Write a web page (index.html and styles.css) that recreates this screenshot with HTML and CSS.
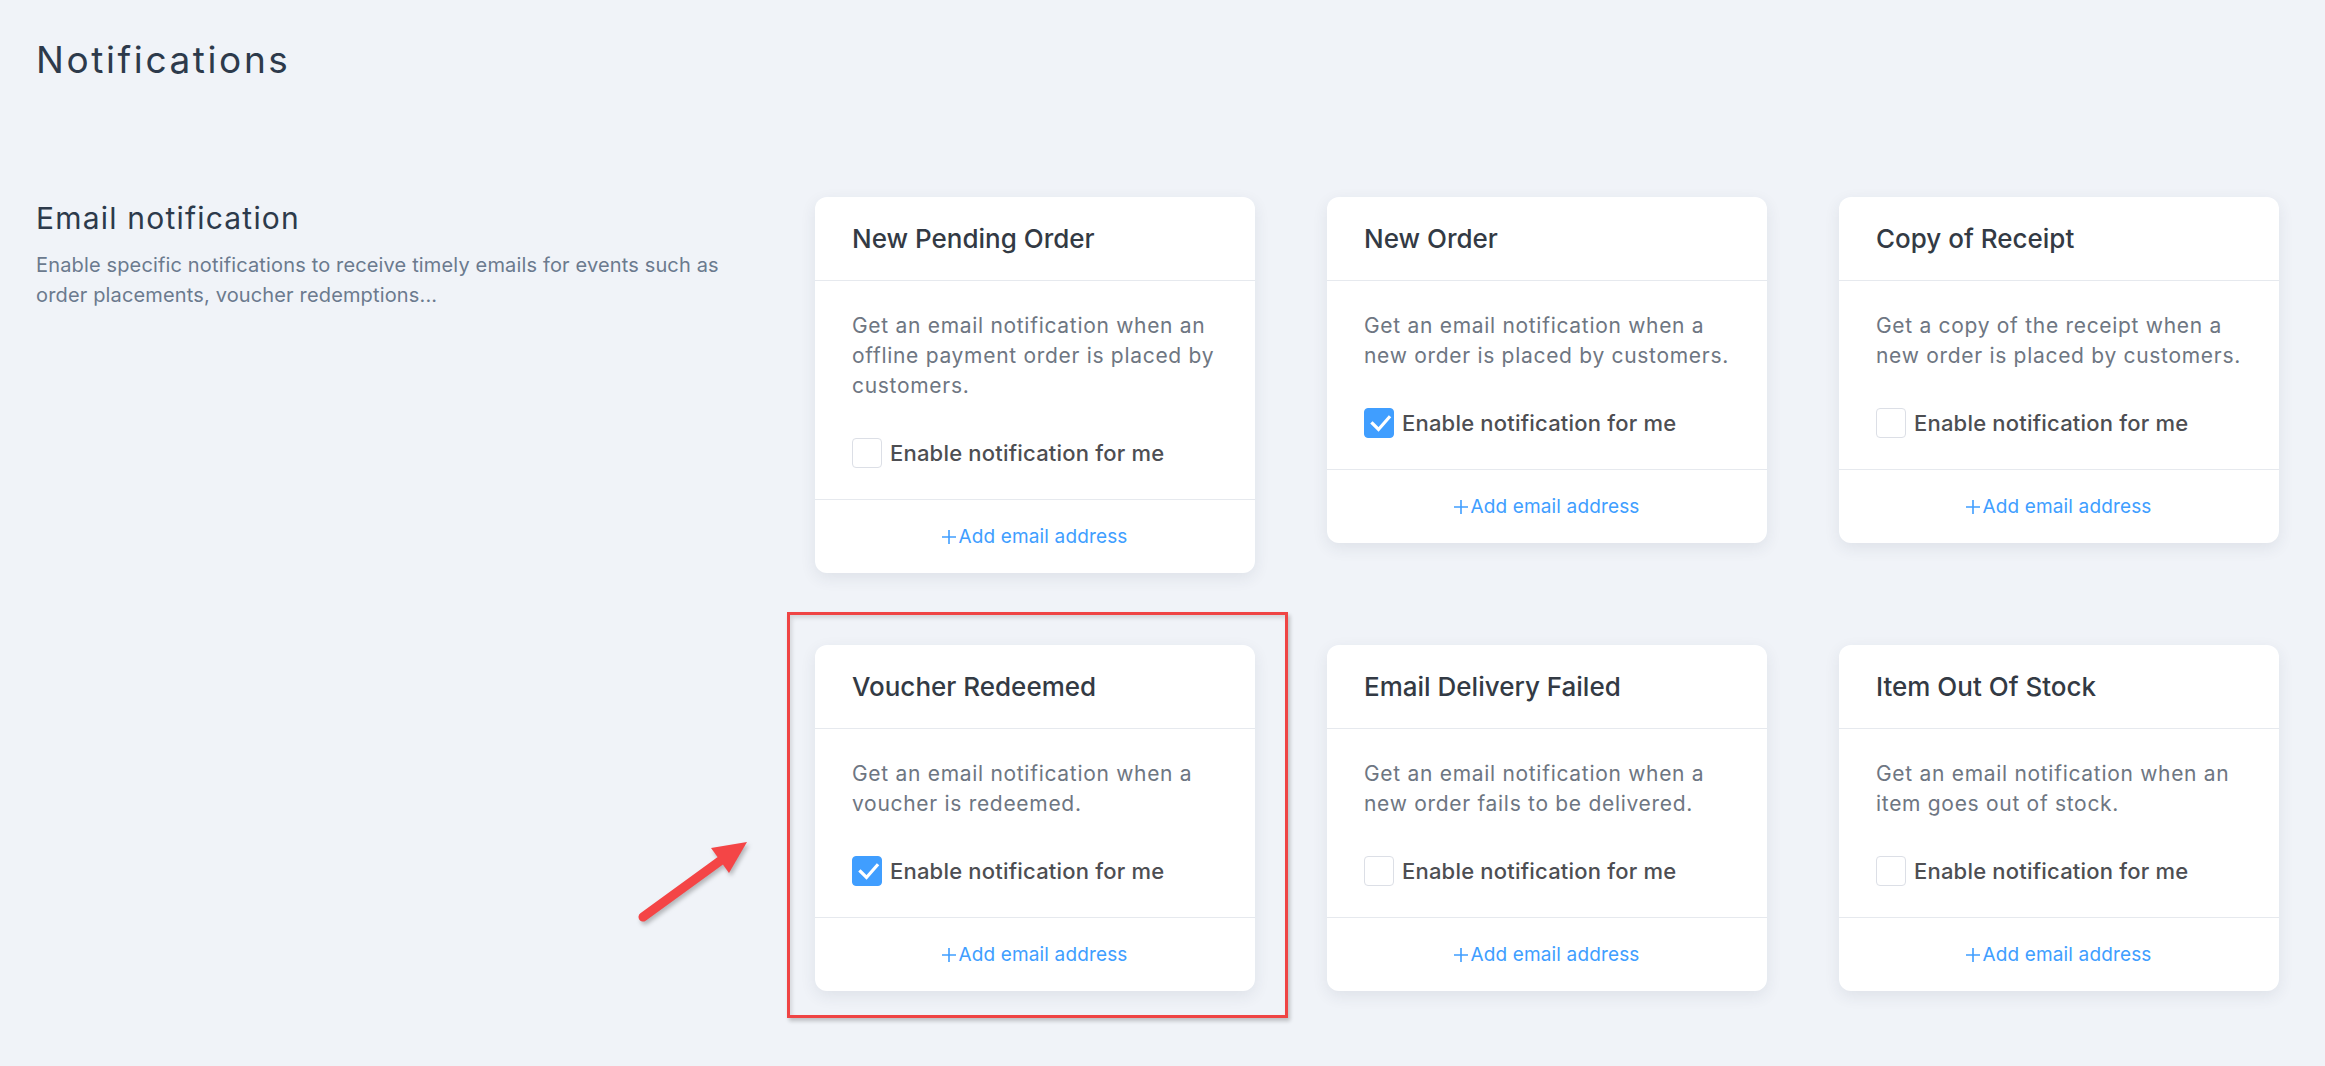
FILE: index.html
```html
<!DOCTYPE html>
<html lang="en">
<head>
<meta charset="utf-8">
<title>Notifications</title>
<link rel="stylesheet" href="styles.css">
</head>
<body>
<main class="page">
  <h1 class="page-title">Notifications</h1>
  <section class="section">
    <div class="section-intro">
      <h2 class="section-title">Email notification</h2>
      <p class="section-desc">Enable specific notifications to receive timely emails for events such as order placements, voucher redemptions...</p>
    </div>
    <div class="card-grid">
      <div class="card">
        <div class="card-head">New Pending Order</div>
        <div class="card-body">
          <p class="card-desc">Get an email notification when an offline payment order is placed by customers.</p>
          <label class="check"><span class="box"></span><span class="check-label">Enable notification for me</span></label>
        </div>
        <div class="card-foot"><span class="add-link"><svg class="plus" viewBox="0 0 14 14"><path d="M7 0V14M0 7H14"/></svg>Add email address</span></div>
      </div>
      <div class="card">
        <div class="card-head">New Order</div>
        <div class="card-body">
          <p class="card-desc">Get an email notification when a new order is placed by customers.</p>
          <label class="check"><span class="box checked"><svg viewBox="0 0 30 30"><path d="M8.5 15.5L14.5 21.5L25 9.5"/></svg></span><span class="check-label">Enable notification for me</span></label>
        </div>
        <div class="card-foot"><span class="add-link"><svg class="plus" viewBox="0 0 14 14"><path d="M7 0V14M0 7H14"/></svg>Add email address</span></div>
      </div>
      <div class="card">
        <div class="card-head">Copy of Receipt</div>
        <div class="card-body">
          <p class="card-desc">Get a copy of the receipt when a new order is placed by customers.</p>
          <label class="check"><span class="box"></span><span class="check-label">Enable notification for me</span></label>
        </div>
        <div class="card-foot"><span class="add-link"><svg class="plus" viewBox="0 0 14 14"><path d="M7 0V14M0 7H14"/></svg>Add email address</span></div>
      </div>
      <div class="card highlighted">
        <div class="card-head">Voucher Redeemed</div>
        <div class="card-body">
          <p class="card-desc">Get an email notification when a voucher is redeemed.</p>
          <label class="check"><span class="box checked"><svg viewBox="0 0 30 30"><path d="M8.5 15.5L14.5 21.5L25 9.5"/></svg></span><span class="check-label">Enable notification for me</span></label>
        </div>
        <div class="card-foot"><span class="add-link"><svg class="plus" viewBox="0 0 14 14"><path d="M7 0V14M0 7H14"/></svg>Add email address</span></div>
        <div class="annot-box"></div>
        <svg class="annot-arrow" viewBox="0 0 130 100">
          <path class="shaft" d="M13 87L90 31"/>
          <polygon points="117,12 81,18 99,43"/>
        </svg>
      </div>
      <div class="card">
        <div class="card-head">Email Delivery Failed</div>
        <div class="card-body">
          <p class="card-desc">Get an email notification when a new order fails to be delivered.</p>
          <label class="check"><span class="box"></span><span class="check-label">Enable notification for me</span></label>
        </div>
        <div class="card-foot"><span class="add-link"><svg class="plus" viewBox="0 0 14 14"><path d="M7 0V14M0 7H14"/></svg>Add email address</span></div>
      </div>
      <div class="card">
        <div class="card-head">Item Out Of Stock</div>
        <div class="card-body">
          <p class="card-desc">Get an email notification when an item goes out of stock.</p>
          <label class="check"><span class="box"></span><span class="check-label">Enable notification for me</span></label>
        </div>
        <div class="card-foot"><span class="add-link"><svg class="plus" viewBox="0 0 14 14"><path d="M7 0V14M0 7H14"/></svg>Add email address</span></div>
      </div>
    </div>
  </section>
</main>
</body>
</html>
```

FILE: styles.css
```css
* { box-sizing: border-box; }
html, body { margin: 0; padding: 0; }
body {
  background: #f0f3f8;
  font-family: Inter, "Noto Sans", "Liberation Sans", sans-serif;
  color: #2f3b4b;
}
.page {
  padding: 38px 46px 0 36px;
  min-height: 1066px;
}
.page-title {
  margin: 0;
  font-size: 37px;
  line-height: 44px;
  font-weight: 400;
  letter-spacing: 2.6px;
  color: #2d3a4b;
}
.section {
  display: flex;
  margin-top: 115px;
}
.section-intro {
  flex: 1;
  padding-right: 60px;
}
.section-title {
  margin: 0;
  font-size: 30px;
  line-height: 36px;
  font-weight: 400;
  letter-spacing: 1.2px;
  color: #2d3a4b;
  padding-top: 3px;
}
.section-desc {
  margin: 14px 0 0;
  font-size: 20px;
  line-height: 30px;
  letter-spacing: 0.15px;
  color: #6b7a8e;
  max-width: 700px;
}
.card-grid {
  flex: none;
  display: grid;
  grid-template-columns: repeat(3, 440px);
  gap: 72px;
  align-items: start;
}
.card {
  position: relative;
  background: #fff;
  border-radius: 12px;
  box-shadow: 0 5px 16px rgba(40, 55, 80, 0.09);
}
.card-head {
  height: 84px;
  display: flex;
  align-items: center;
  padding: 0 37px;
  border-bottom: 1px solid #e6e9ee;
  font-size: 26px;
  font-weight: 500;
  color: #333a44;
}
.card-body {
  padding: 30px 37px 31px;
  border-bottom: 1px solid #e6e9ee;
}
.card-desc {
  margin: 0 0 37px;
  font-size: 21px;
  line-height: 30px;
  letter-spacing: 0.7px;
  color: #6e7682;
}
.check {
  display: flex;
  align-items: center;
  gap: 8px;
  height: 30px;
}
.box {
  width: 30px;
  height: 30px;
  border: 1.5px solid #dcdfe6;
  border-radius: 4px;
  background: #fff;
  display: flex;
  align-items: center;
  justify-content: center;
}
.box.checked {
  background: #409eff;
  border-color: #409eff;
}
.box svg {
  width: 30px;
  height: 30px;
  flex: none;
}
.box svg path {
  fill: none;
  stroke: #fff;
  stroke-width: 3.2;
  stroke-linecap: square;
}
.check-label {
  font-size: 22px;
  font-weight: 500;
  letter-spacing: 0.2px;
  color: #4d4e52;
}
.card-foot {
  height: 73px;
  display: flex;
  align-items: center;
  justify-content: center;
}
.add-link {
  display: inline-flex;
  align-items: center;
  gap: 2px;
  color: #409eff;
  font-size: 19px;
  letter-spacing: 0.15px;
}
.plus {
  width: 14px;
  height: 14px;
}
.plus path {
  stroke: #409eff;
  stroke-width: 1.6;
  fill: none;
}
.annot-box {
  position: absolute;
  left: -28px;
  top: -33px;
  right: -33px;
  bottom: -27px;
  border: 3.5px solid #ef4444;
  box-shadow: 2px 3px 4px rgba(0, 0, 0, 0.22), inset 2px 3px 4px rgba(0, 0, 0, 0.12);
  pointer-events: none;
}
.annot-arrow {
  position: absolute;
  left: -185px;
  top: 185px;
  width: 130px;
  height: 100px;
  overflow: visible;
  filter: drop-shadow(2px 3px 2px rgba(0, 0, 0, 0.25));
}
.annot-arrow .shaft {
  stroke: #f44546;
  stroke-width: 9;
  stroke-linecap: round;
  fill: none;
}
.annot-arrow polygon {
  fill: #f44546;
}
```
